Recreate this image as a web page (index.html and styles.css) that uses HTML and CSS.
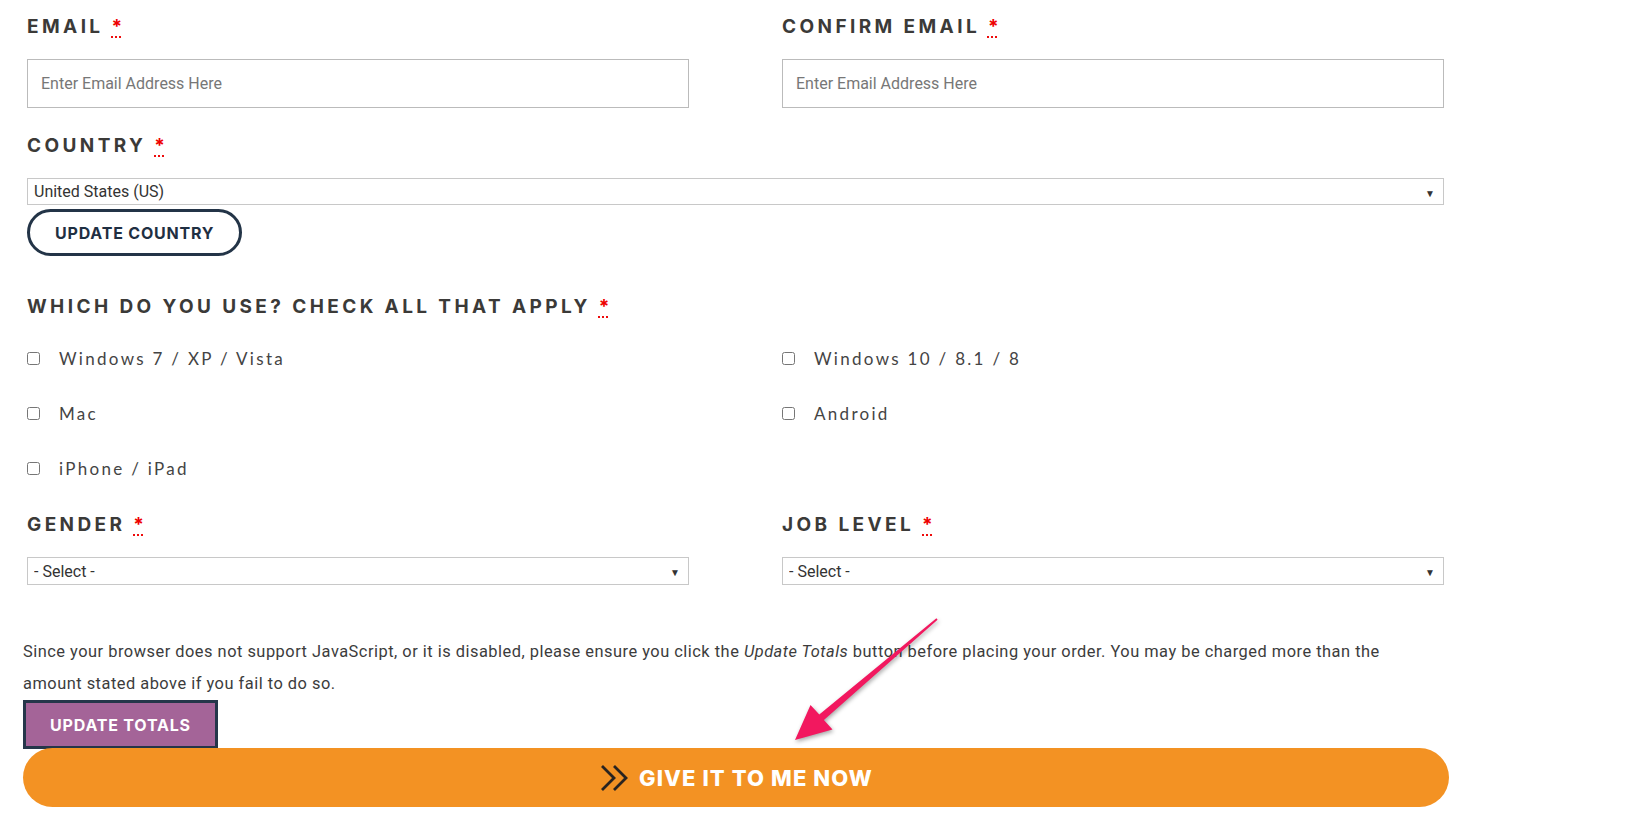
FILE: index.html
```html
<!DOCTYPE html>
<html lang="en">
<head>
    <meta charset="UTF-8">
    <meta name="viewport" content="width=device-width, initial-scale=1.0">
    <title>Checkout</title>
    <link rel="stylesheet" href="styles.css">
</head>
<body>

    <div class="checkout">
        <div class="fields">
            <div class="field-row">
                <div class="field">
                    <label class="field-label">Email <abbr class="required" title="required">*</abbr></label>
                    <input type="text" class="text-input" placeholder="Enter Email Address Here">
                </div>
                <div class="field">
                    <label class="field-label">Confirm Email <abbr class="required" title="required">*</abbr></label>
                    <input type="text" class="text-input" placeholder="Enter Email Address Here">
                </div>
            </div>

            <div class="field">
                <label class="field-label">Country <abbr class="required" title="required">*</abbr></label>
                <div class="select-box">
                    <select>
                        <option>United States (US)</option>
                    </select>
                </div>
                <button class="btn-outline">Update Country</button>
            </div>

            <div class="field field-checks">
                <label class="field-label">Which do you use? Check all that apply <abbr class="required" title="required">*</abbr></label>
                <div class="check-grid">
                    <label class="check"><input type="checkbox"> Windows 7 / XP / Vista</label>
                    <label class="check"><input type="checkbox"> Windows 10 / 8.1 / 8</label>
                    <label class="check"><input type="checkbox"> Mac</label>
                    <label class="check"><input type="checkbox"> Android</label>
                    <label class="check"><input type="checkbox"> iPhone / iPad</label>
                </div>
            </div>

            <div class="field-row">
                <div class="field">
                    <label class="field-label">Gender <abbr class="required" title="required">*</abbr></label>
                    <div class="select-box">
                        <select>
                            <option>- Select -</option>
                        </select>
                    </div>
                </div>
                <div class="field">
                    <label class="field-label">Job Level <abbr class="required" title="required">*</abbr></label>
                    <div class="select-box">
                        <select>
                            <option>- Select -</option>
                        </select>
                    </div>
                </div>
            </div>
        </div>

        <p class="notice">Since your browser does not support JavaScript, or it is disabled, please ensure you click the <em>Update Totals</em> button before placing your order. You may be charged more than the amount stated above if you fail to do so.</p>
        <button class="btn-totals">Update Totals</button>
        <button class="btn-order">
            <svg class="chevrons" width="32" height="28" viewBox="0 0 32 28">
                <path d="M3 2 L15 14 L3 26 M15 2 L27 14 L15 26" fill="none" stroke="#2a2420" stroke-width="2.8"/>
            </svg>
            Give it to me now
        </button>

        <svg class="pointer" width="170" height="145" viewBox="0 0 170 145">
            <polygon points="156.4,11.2 39.3,107.6 30.5,98 15,133 52.5,122.5 43.9,113 157.6,12.8" fill="#f2185f"/>
        </svg>
    </div>

</body>
</html>
```

FILE: styles.css
```css
body {
    margin: 0;
    background-color: #fff;
    font-family: "Open Sans", sans-serif;
    color: #444;
}
.checkout {
    position: relative;
    width: 1426px;
    padding-left: 23px;
}
.fields {
    padding-left: 4px;
    width: 1417px;
}
.field-row {
    display: grid;
    grid-template-columns: 662px 662px;
    column-gap: 93px;
}
.field {
    display: flex;
    flex-direction: column;
    align-items: flex-start;
}
.field-label {
    display: block;
    font-family: Inter, sans-serif;
    font-weight: 700;
    font-size: 19px;
    line-height: 24px;
    letter-spacing: 3.4px;
    text-transform: uppercase;
    color: #3b3a38;
    margin-top: 15px;
    margin-bottom: 20px;
}
.required {
    color: #e00;
    text-decoration: underline dotted;
    text-underline-offset: 4px;
    letter-spacing: 0;
    border: none;
}
.text-input {
    width: 100%;
    height: 49px;
    box-sizing: border-box;
    border: 1px solid #bbb;
    padding: 0 13px;
    font-family: Roboto, sans-serif;
    font-size: 16px;
    color: #333;
}
.text-input::placeholder {
    color: #777;
}
.field-row:first-child + .field .field-label {
    margin-top: 26px;
}
.select-box {
    position: relative;
    width: 100%;
}
.select-box select {
    appearance: none;
    -webkit-appearance: none;
    width: 100%;
    height: 27px;
    box-sizing: border-box;
    border: 1px solid #c8c8c8;
    border-radius: 0;
    background: #fff;
    padding: 0 6px;
    font-family: Roboto, sans-serif;
    font-size: 16px;
    color: #333;
}
.select-box::after {
    content: "\25BC";
    position: absolute;
    right: 9px;
    top: 8px;
    font-size: 10px;
    color: #333;
    pointer-events: none;
}
.btn-outline {
    margin-top: 4px;
    height: 47px;
    padding: 0 25px;
    border: 3px solid #233447;
    border-radius: 24px;
    background: #fff;
    font-family: Inter, sans-serif;
    font-weight: 700;
    font-size: 16px;
    letter-spacing: 0.8px;
    text-transform: uppercase;
    color: #1f2f42;
    cursor: pointer;
}
.field-checks .field-label {
    margin-top: 39px;
    margin-bottom: 12px;
}
.check-grid {
    display: grid;
    grid-template-columns: 662px 662px;
    column-gap: 93px;
    grid-auto-rows: 55px;
    width: 100%;
}
.check {
    display: flex;
    align-items: center;
    font-family: Lato, sans-serif;
    font-size: 17px;
    letter-spacing: 2.3px;
    color: #444;
}
.check input {
    width: 13px;
    height: 13px;
    margin: 0 19px 0 0;
}
.field-row:last-child .field-label {
    margin-top: 17px;
}
.field-row:last-child .select-box select {
    height: 28px;
}
.notice {
    max-width: 1410px;
    margin: 51px 0 0;
    font-family: Roboto, sans-serif;
    font-size: 16.4px;
    letter-spacing: 0.5px;
    line-height: 32px;
    color: #3c3c3c;
}
.btn-totals {
    display: block;
    height: 49px;
    width: 195px;
    background-color: #a46498;
    border: 3px solid #25364a;
    font-family: Inter, sans-serif;
    font-weight: 700;
    font-size: 16px;
    letter-spacing: 0.8px;
    text-transform: uppercase;
    color: #fff;
    cursor: pointer;
}
.btn-order {
    display: flex;
    justify-content: center;
    align-items: center;
    gap: 8px;
    width: 1426px;
    height: 59px;
    margin-top: -1px;
    border: none;
    border-radius: 30px;
    background-color: #f39223;
    font-family: Inter, sans-serif;
    font-weight: 800;
    font-size: 22px;
    letter-spacing: 1.1px;
    text-transform: uppercase;
    color: #fff;
    cursor: pointer;
}
.pointer {
    position: absolute;
    left: 780px;
    top: 607px;
    filter: drop-shadow(1px 2px 2px rgba(0, 0, 0, 0.35));
}
```
